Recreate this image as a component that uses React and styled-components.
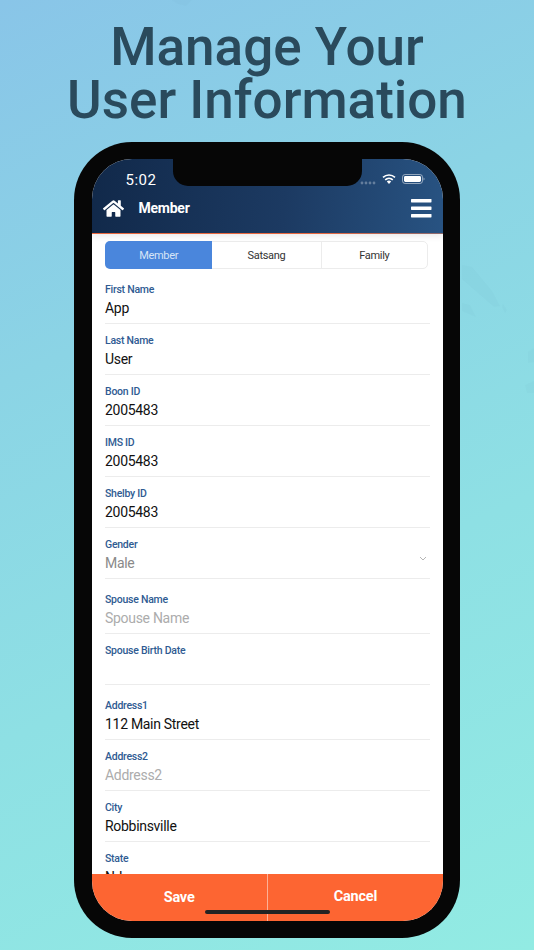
import React from "react";
import styled, { createGlobalStyle } from "styled-components";
import { FaHome } from "react-icons/fa";

const Global = createGlobalStyle`
  html, body { margin: 0; padding: 0; }
  body { font-family: Roboto, "Liberation Sans", sans-serif; }
`;

const Page = styled.div`
  position: relative;
  width: 534px;
  height: 950px;
  overflow: hidden;
  display: flex;
  flex-direction: column;
  align-items: center;
  background: linear-gradient(155deg, #89c5e8 0%, #8bd4e5 32%, #8ee0e4 62%, #92ebe3 100%);
`;

const Texture = styled.svg`
  position: absolute;
  inset: 0;
  pointer-events: none;
`;

const Title = styled.h1`
  position: relative;
  margin: 21px 0 0;
  height: 121px;
  font-size: 53px;
  line-height: 53px;
  font-weight: 500;
  text-align: center;
  color: #2a4a5c;
`;

const Phone = styled.div`
  position: relative;
  box-sizing: border-box;
  width: 386px;
  height: 796px;
  padding: 17px 17px 17px 17.5px;
  background: #060606;
  border-radius: 58px;
  flex: none;
`;

const Screen = styled.div`
  position: relative;
  height: 762px;
  display: flex;
  flex-direction: column;
  overflow: hidden;
  background: #fff;
  border-radius: 40px;
`;

const Notch = styled.div`
  position: absolute;
  top: 0;
  left: 81px;
  width: 189px;
  height: 27px;
  background: #060606;
  border-radius: 0 0 15px 15px;
`;

const Header = styled.header`
  position: relative;
  box-sizing: border-box;
  height: 74.5px;
  flex: none;
  padding: 0 11px;
  display: flex;
  flex-direction: column;
  background: linear-gradient(95deg, #11294a 0%, #1c3a62 55%, #285382 100%);
  border-bottom: 1.5px solid;
  border-image: linear-gradient(90deg, #e8683f, #e8683f 65%, #8a6a70) 1;
  box-shadow: 0 2px 7px rgba(0, 0, 0, 0.09);
  color: #fff;
`;

const StatusBar = styled.div`
  height: 39px;
  box-sizing: border-box;
  display: flex;
  align-items: flex-end;
  justify-content: space-between;
  padding: 0 7px 9px 23px;
`;

const Time = styled.span`
  font-size: 15px;
  line-height: 20px;
  letter-spacing: 0.5px;
  margin-bottom: -1px;
`;

const StatusIcons = styled.div`
  display: flex;
  align-items: center;
  gap: 6px;
  height: 20px;
`;

const SignalDots = styled.svg`
  margin-top: 7px;
`;

const NavBar = styled.div`
  display: flex;
  align-items: center;
  height: 20px;
`;

const NavTitle = styled.span`
  margin-left: 15px;
  flex: 1;
  font-size: 14px;
  font-weight: 700;
  letter-spacing: -0.25px;
`;

const Content = styled.main`
  flex: 1;
  min-height: 0;
  overflow: hidden;
  padding: 7.5px 13px 0 13.5px;
`;

const Tabs = styled.div`
  box-sizing: border-box;
  width: 323px;
  height: 28px;
  display: flex;
  border: 1px solid #ececec;
  border-radius: 5px;
  margin-bottom: 4px;
`;

const Tab = styled.div`
  box-sizing: border-box;
  width: ${(p) => p.$w}px;
  margin: ${(p) => (p.$active ? "-1px 0 -1px -1px" : "0")};
  display: flex;
  align-items: center;
  justify-content: center;
  font-size: 11px;
  letter-spacing: -0.3px;
  color: ${(p) => (p.$active ? "#d6e4f6" : "#333")};
  background: ${(p) => (p.$active ? "#4a86dc" : "transparent")};
  border-radius: ${(p) => (p.$active ? "5px 0 0 5px" : "0")};
  border-left: ${(p) => (p.$divider ? "1px solid #ececec" : "none")};
`;

const Field = styled.div`
  box-sizing: border-box;
  position: relative;
  height: ${(p) => (p.$gap ? 55 : 51)}px;
  padding-top: ${(p) => (p.$gap ? 14 : 10)}px;
  width: 325px;
  border-bottom: 1px solid #ececec;
  &:last-child { border-bottom: none; }
`;

const Label = styled.div`
  font-size: 10.5px;
  line-height: 14px;
  font-weight: 500;
  letter-spacing: -0.25px;
  color: #2f5b92;
`;

const Value = styled.div`
  margin-top: 1px;
  font-size: 14px;
  line-height: 20px;
  letter-spacing: -0.3px;
  color: ${(p) => (p.$kind === "muted" ? "#8a8a8a" : p.$kind === "placeholder" ? "#acacac" : "#111")};
`;

const Caret = styled.svg`
  position: absolute;
  right: 3px;
  top: 28px;
`;

const Footer = styled.footer`
  position: absolute;
  left: 0;
  right: 0;
  bottom: 0;
  height: 47px;
  display: flex;
  background: #fd6532;
  color: #fff;
`;

const FooterButton = styled.div`
  flex: 1;
  display: flex;
  justify-content: center;
  padding-top: ${(p) => p.$top}px;
  font-size: 14.5px;
  line-height: 18px;
  font-weight: 700;
  letter-spacing: -0.2px;
  & + & { border-left: 1px solid #fdb096; }
`;

const HomeBar = styled.div`
  position: absolute;
  left: 113px;
  bottom: 7px;
  width: 125px;
  height: 4px;
  border-radius: 2px;
  background: #232323;
`;

const fields = [
  { label: "First Name", value: "App" },
  { label: "Last Name", value: "User" },
  { label: "Boon ID", value: "2005483" },
  { label: "IMS ID", value: "2005483" },
  { label: "Shelby ID", value: "2005483" },
  { label: "Gender", value: "Male", kind: "muted", caret: true },
  { label: "Spouse Name", value: "Spouse Name", kind: "placeholder", gap: true },
  { label: "Spouse Birth Date", value: "\u00a0" },
  { label: "Address1", value: "112 Main Street", gap: true },
  { label: "Address2", value: "Address2", kind: "placeholder" },
  { label: "City", value: "Robbinsville" },
  { label: "State", value: "NJ" },
];

export default function App() {
  return (
    <Page>
      <Global />
      <Texture width="534" height="950" viewBox="0 0 534 950">
        <g fill="#5f9fb0" opacity="0.05">
          <path d="M462 265l10 2 20 24 8 15-6 1-16-14-16-14ZM462 303l8 2 6 12-14-6ZM503 304l4 6-2 3-3-6ZM528 352l6-4v14l-6 1ZM525 385l9-4v12h-7Z" />
          <path d="M172 0h20l-6 6-8-2Z" />
        </g>
      </Texture>
      <Title>
        Manage Your
        <br />
        User Information
      </Title>
      <Phone>
        <Screen>
          <Header>
            <StatusBar>
              <Time>5:02</Time>
              <StatusIcons>
                <SignalDots width="16" height="4" viewBox="0 0 16 4">
                  <g fill="#fff" opacity="0.3">
                    <circle cx="2" cy="2" r="1.4" />
                    <circle cx="6" cy="2" r="1.4" />
                    <circle cx="10" cy="2" r="1.4" />
                    <circle cx="14" cy="2" r="1.4" />
                  </g>
                </SignalDots>
                <svg width="14" height="10" viewBox="0 0 14 10">
                  <path d="M7 10 4.8 7.6a3.1 3.1 0 0 1 4.4 0Z" fill="#fff" />
                  <path d="M3.2 5.9a5.5 5.5 0 0 1 7.6 0M1 3.4a8.8 8.8 0 0 1 12 0" fill="none" stroke="#fff" strokeWidth="1.6" />
                </svg>
                <svg width="23" height="10" viewBox="0 0 23 10">
                  <rect x="0.5" y="0.5" width="20" height="9" rx="2.6" fill="none" stroke="#fff" strokeOpacity="0.5" />
                  <rect x="2" y="2" width="17" height="6" rx="1.4" fill="#fff" />
                  <path d="M21.5 3.5v3a1.6 1.6 0 0 0 0-3Z" fill="#fff" fillOpacity="0.5" />
                </svg>
              </StatusIcons>
            </StatusBar>
            <NavBar>
              <FaHome size={21} color="#fff" />
              <NavTitle>Member</NavTitle>
              <svg width="21" height="19" viewBox="0 0 21 19">
                <g fill="#fff">
                  <rect x="0" y="0" width="20.5" height="3.4" rx="0.6" />
                  <rect x="0" y="7.5" width="20.5" height="3.4" rx="0.6" />
                  <rect x="0" y="15" width="20.5" height="3.4" rx="0.6" />
                </g>
              </svg>
            </NavBar>
          </Header>
          <Content>
            <Tabs>
              <Tab $active $w={108}>Member</Tab>
              <Tab $w={109}>Satsang</Tab>
              <Tab $w={107} $divider>Family</Tab>
            </Tabs>
            {fields.map((f) => (
              <Field key={f.label} $gap={f.gap}>
                <Label>{f.label}</Label>
                <Value $kind={f.kind}>{f.value}</Value>
                {f.caret && (
                  <Caret width="8" height="5" viewBox="0 0 8 5">
                    <path d="M1 1l3 3 3-3" fill="none" stroke="#b5b5b5" strokeWidth="1" />
                  </Caret>
                )}
              </Field>
            ))}
          </Content>
          <Footer>
            <FooterButton $top={15}>Save</FooterButton>
            <FooterButton $top={14}>Cancel</FooterButton>
          </Footer>
          <HomeBar />
          <Notch />
        </Screen>
      </Phone>
    </Page>
  );
}
